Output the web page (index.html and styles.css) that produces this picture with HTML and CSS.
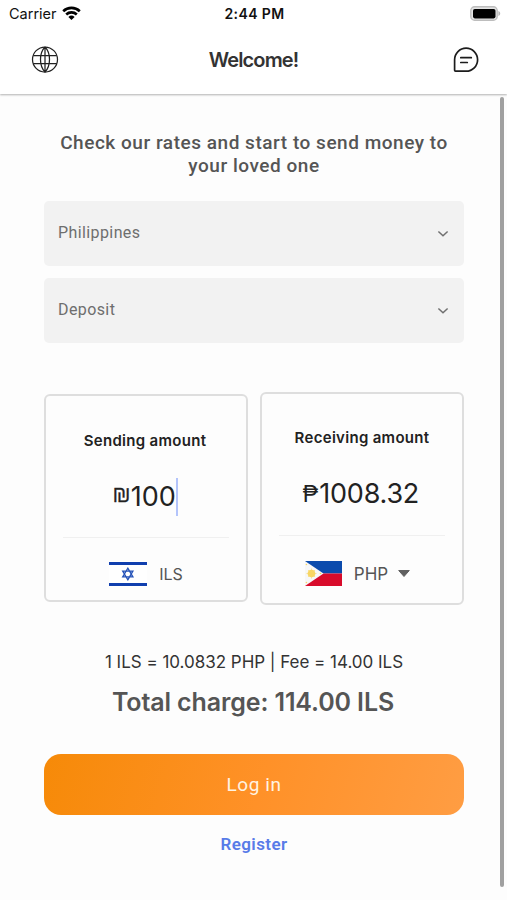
FILE: index.html
```html
<!DOCTYPE html>
<html lang="en">
<head>
<meta charset="utf-8">
<title>Welcome</title>
<link rel="stylesheet" href="styles.css">
</head>
<body>
<header class="header">
  <div class="status">
    <div class="carrier"><span class="carrier-name">Carrier</span>
      <svg class="wifi" width="19" height="15" viewBox="0 0 19 15" fill="none" stroke="#000" stroke-width="2.6"><path d="M1.2 5.2a12 12 0 0 1 16.6 0M4.2 8.5a7.7 7.7 0 0 1 10.6 0"/><path d="M9.5 14 6.4 10.9a4.5 4.5 0 0 1 6.2 0z" fill="#000" stroke="none"/></svg>
    </div>
    <span class="time">2:44 PM</span>
    <svg class="battery" width="31" height="15" viewBox="0 0 31 15"><rect x=".8" y=".8" width="26.4" height="13.4" rx="3.8" fill="#e4e4e4" stroke="#bdbdbd" stroke-width="1.4"/><rect x="3" y="3" width="22.500" height="9.400" rx="1.8"/><path d="M28.4 5c2.400.8 2.400 4.200 0 5z" fill="#b5b5b5"/></svg>
  </div>
  <div class="navbar">
    <svg width="28" height="28" viewBox="0 0 28 28" fill="none" stroke="#222" stroke-width="1.25"><circle cx="14" cy="13.500" r="12.500"/><path d="M14 1v25M2.200 9.500h23.600M2.200 17.500h23.600M14 1c-6 6-6 19 0 25M14 1c6 6 6 19 0 25"/></svg>
    <h1 class="title">Welcome!</h1>
    <svg width="28" height="28" viewBox="0 0 28 28" fill="none" stroke="#1c1c1c" stroke-width="1.700" stroke-linecap="round" stroke-linejoin="round"><path d="M3.500 25.200h10.600A11.500 11.500 0 1 0 2.600 13.700v10.600c0 .5.400.9.900.9z"/><path d="M8.800 11.700h10.500M8.800 16.500h6.500"/></svg>
  </div>
</header>
<main class="content">
  <h2 class="lead">Check our rates and start to send money to<br>your loved one</h2>
  <div class="select"><span class="country">Philippines</span><svg width="12" height="8" viewBox="0 0 12 8" fill="none" stroke="#707070" stroke-width="1.500"><path d="m1.400 1.500 4.600 4.300 4.600-4.300"/></svg></div>
  <div class="select"><span class="method">Deposit</span><svg width="12" height="8" viewBox="0 0 12 8" fill="none" stroke="#707070" stroke-width="1.500"><path d="m1.400 1.500 4.600 4.300 4.600-4.300"/></svg></div>
  <section class="cards">
    <div class="card send">
      <h3 class="label">Sending amount</h3>
      <div class="amount"><span class="shekel">₪</span><span class="value">100</span><i class="caret"></i></div>
      <div class="currency">
        <svg width="38" height="26" viewBox="0 0 38 26"><path fill="#fff" d="M0 0h38v26H0z"/><path fill="#103fae" d="M0 1h38v3H0zM0 22h38v3H0z"/><path d="m18.800 7.200 5.100 8.700H13.700zM18.800 18.800l5.100-8.700H13.700z" fill="none" stroke="#2452b8" stroke-width="1.300"/></svg>
        <span class="code">ILS</span>
      </div>
    </div>
    <div class="card receive">
      <h3 class="label">Receiving amount</h3>
      <div class="amount"><span class="peso">₱</span><span class="value">1008.32</span></div>
      <div class="currency">
        <svg width="37" height="25" viewBox="0 0 37 25"><path fill="#0b4bad" d="M0 0h37v12.500H0z"/><path fill="#d80b2b" d="M0 12.500h37V25H0z"/><path fill="#f7f7f7" d="m0 0 18.500 12.500L0 25z"/><circle cx="6.500" cy="12.500" r="3.800" fill="#f8d663"/><path d="M6.500 7.500v10M1.500 12.500h10M3 9l7 7M10 9l-7 7" stroke="#f8d663" stroke-width=".6"/><circle cx="1.400" cy="3.500" r=".8" fill="#f8d663"/><circle cx="1.400" cy="21.500" r=".8" fill="#f8d663"/><circle cx="15.500" cy="12.500" r=".8" fill="#f8d663"/></svg>
        <span class="code">PHP</span>
        <svg class="arrow" width="12" height="7" viewBox="0 0 12 7"><path d="M.7.500h10.600L6 6.500z" fill="#606060" stroke="#606060" stroke-linejoin="round"/></svg>
      </div>
    </div>
  </section>
  <p class="rate">1 ILS = 10.0832 PHP | Fee = 14.00 ILS</p>
  <p class="total">Total charge: 114.00 ILS</p>
  <button class="login">Log in</button>
  <a class="register">Register</a>
  <div class="scrollbar"></div>
</main>
</body>
</html>
```
FILE: styles.css
```css
* { box-sizing: border-box; }
body { margin: 0; height: 900px; overflow: hidden; background: #fdfdfd; font-family: Roboto, sans-serif; color: #555; }
h1, h2, h3, p { margin: 0; font-weight: 500; }
svg { display: block; flex: none; }
span, h1, h2, h3, p, a { white-space: nowrap; }
.header { height: 94px; background: #fff; box-shadow: 0 1px 2px rgba(0,0,0,.3); position: relative; }
.status { height: 28px; display: grid; grid-template-columns: 1fr auto 1fr; align-items: center; padding: 0 6px 1px 9px; font-family: Inter, sans-serif; color: #111; }
.carrier { display: flex; align-items: center; gap: 5px; font-size: 14.500px; }
.time { font-size: 14px; font-weight: 600; letter-spacing: .4px; margin-left: -1px; }
.battery { justify-self: end; }
.navbar { height: 64px; display: flex; align-items: center; justify-content: space-between; padding: 0 27px 0 31px; }
.title { font: 600 20px/24px Inter, sans-serif; letter-spacing: -.85px; color: #333; margin-right: 4px; }
.content { display: flex; flex-direction: column; padding: 37px 43px 0 44px; height: 806px; position: relative; }
.lead { text-align: center; font-size: 19px; line-height: 23px; letter-spacing: .53px; margin-bottom: 24px; }
.select { height: 65px; margin-bottom: 12px; border-radius: 5px; background: #f2f2f2; display: flex; justify-content: space-between; align-items: center; padding: 0 15px 2px 14px; font-size: 16px; letter-spacing: .4px; color: #6e6e6e; }
.select svg { margin-top: 3px; }
.cards { display: flex; align-items: center; gap: 12px; margin-top: 36px; height: 214px; }
.card { flex: 1; height: 208px; border: 2px solid #dedede; border-radius: 6px; padding: 34px 17px 0; display: flex; flex-direction: column; align-items: center; }
.receive { height: 213px; }
.label { font: 600 15px/22px Inter, sans-serif; letter-spacing: .3px; color: #222; }
.send .label { margin-left: -2px; }
.receive .label { margin-top: -1px; }
.amount { flex: none; display: flex; align-items: center; justify-content: center; width: 100%; height: 86px; padding: 4px 2px 0 0; border-bottom: 1px solid #f0f0f0; font: 400 27px/40px Inter, sans-serif; color: #222; }
.receive .amount { height: 87px; }
.receive .value { letter-spacing: -.2px; }
.caret { width: 2px; height: 38px; background: #b3c4fb; }
.shekel { font-size: 24px; font-weight: 300; margin-top: -6px; -webkit-text-stroke: .3px #222; }
.peso { font: 400 23px/40px "Liberation Sans", sans-serif; margin-right: 1px; }
.currency { flex: none; display: flex; align-items: center; gap: 12px; height: 71px; }
.receive .currency { height: 76px; padding-right: 9px; }
.code { font: 400 16px/20px Inter, sans-serif; color: #555; }
.receive .code { font-size: 17px; }
.arrow { margin-left: -2px; }
.rate { text-align: center; font: 400 17px/22px Inter, sans-serif; letter-spacing: -.02px; color: #333; margin-top: 46px; }
.total { text-align: center; font: 600 25px/32px Inter, sans-serif; letter-spacing: -.12px; margin: 13px 2px 0 0; }
.login { height: 61px; margin-top: 36px; border: 0; border-radius: 17px; background: linear-gradient(105deg, #f68a08, #ff9128 52%, #ff9d43); color: #fff3e2; font: 400 19px Roboto, sans-serif; letter-spacing: .6px; }
.register { text-align: center; margin-top: 19px; font-size: 17px; line-height: 20px; font-weight: 600; letter-spacing: .4px; color: #587be8; }
.scrollbar { position: absolute; right: 3px; top: 3px; width: 4px; height: 790px; border-radius: 2px; background: #a0a0a0; }
```
